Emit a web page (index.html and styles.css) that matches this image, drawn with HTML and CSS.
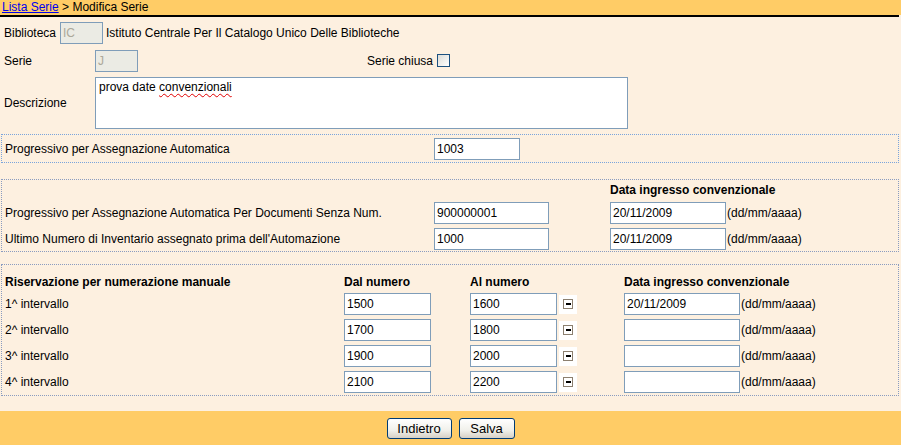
FILE: index.html
```html
<!DOCTYPE html>
<html>
<head>
<meta charset="utf-8">
<link rel="stylesheet" href="styles.css">
</head>
<body>
<div class="topbar"><a class="link" href="#">Lista Serie</a> &gt; Modifica Serie</div>
<div class="topline"></div>

<div class="top">
  <div class="row r1">
    <span class="lbl-inline">Biblioteca</span>
    <span class="inp dis w43">IC</span>
    <span>Istituto Centrale Per Il Catalogo Unico Delle Biblioteche</span>
  </div>
  <div class="row r2">
    <span class="lbl">Serie</span>
    <span class="inp dis w43">J</span>
    <span class="chiusa">Serie chiusa <span class="chk"></span></span>
  </div>
  <div class="row r3">
    <span class="lbl">Descrizione</span>
    <div class="area">prova date <span class="spell">convenzionali</span></div>
  </div>
</div>

<div class="box box1">
  <span class="b1lbl">Progressivo per Assegnazione Automatica</span>
  <span class="inp w86">1003</span>
</div>

<div class="box box2">
  <span></span><span></span><span class="hd">Data ingresso convenzionale</span>
  <span class="cl">Progressivo per Assegnazione Automatica Per Documenti Senza Num.</span>
  <span class="inp w115">900000001</span>
  <span class="cl"><span class="inp w116">20/11/2009</span><span class="fmt">(dd/mm/aaaa)</span></span>
  <span class="cl">Ultimo Numero di Inventario assegnato prima dell'Automazione</span>
  <span class="inp w115">1000</span>
  <span class="cl"><span class="inp w116">20/11/2009</span><span class="fmt">(dd/mm/aaaa)</span></span>
</div>

<div class="box box3">
  <span class="hd">Riservazione per numerazione manuale</span>
  <span class="hd">Dal numero</span>
  <span class="hd">Al numero</span>
  <span class="hd">Data ingresso convenzionale</span>

  <span class="cl">1^ intervallo</span>
  <span class="inp w87">1500</span>
  <span class="cl"><span class="inp w87">1600</span><span class="mini"><span class="minus"></span></span></span>
  <span class="cl"><span class="inp w116">20/11/2009</span><span class="fmt">(dd/mm/aaaa)</span></span>

  <span class="cl">2^ intervallo</span>
  <span class="inp w87">1700</span>
  <span class="cl"><span class="inp w87">1800</span><span class="mini"><span class="minus"></span></span></span>
  <span class="cl"><span class="inp w116"></span><span class="fmt">(dd/mm/aaaa)</span></span>

  <span class="cl">3^ intervallo</span>
  <span class="inp w87">1900</span>
  <span class="cl"><span class="inp w87">2000</span><span class="mini"><span class="minus"></span></span></span>
  <span class="cl"><span class="inp w116"></span><span class="fmt">(dd/mm/aaaa)</span></span>

  <span class="cl">4^ intervallo</span>
  <span class="inp w87">2100</span>
  <span class="cl"><span class="inp w87">2200</span><span class="mini"><span class="minus"></span></span></span>
  <span class="cl"><span class="inp w116"></span><span class="fmt">(dd/mm/aaaa)</span></span>
</div>

<div class="footer">
  <button class="btn b-ind">Indietro</button>
  <button class="btn b-sal">Salva</button>
</div>
</body>
</html>
```

FILE: styles.css
```css
html, body {
  margin: 0;
  padding: 0;
  background: #fdf0e0;
  font-family: "Liberation Sans", Arial, sans-serif;
  font-size: 12px;
  color: #000;
  width: 901px;
  height: 445px;
  overflow: hidden;
}

.topbar {
  height: 15px;
  line-height: 15px;
  background: #ffcc66;
  padding-left: 2px;
  white-space: nowrap;
}
.link {
  color: #0000ee;
  text-decoration: underline;
}
.topline {
  height: 2px;
  background: #000;
  margin-right: 2px;
}

.top {
  padding-left: 4px;
}
.row {
  display: flex;
  align-items: center;
}
.r1 { margin-top: 5px; height: 22px; }
.r2 { margin-top: 6px; height: 22px; }
.r3 { margin-top: 5px; }
.lbl-inline { margin-right: 4px; }
.r1 .inp { margin-right: 3px; }
.lbl {
  width: 91px;
  flex: none;
}
.chiusa {
  margin-left: 229px;
  display: flex;
  align-items: center;
  gap: 4px;
}
.chk {
  display: inline-block;
  width: 11px;
  height: 11px;
  border: 1px solid #1c5180;
  background: linear-gradient(135deg, #dcdcd7, #ffffff);
  margin-top: -1px;
}
.area {
  width: 525px;
  height: 48px;
  border: 1px solid #7f9db9;
  background: #fff;
  padding: 1px 3px;
  box-sizing: content-box;
  line-height: 16px;
}
.spell {
  text-decoration: underline wavy #e00000;
  text-decoration-thickness: 1px;
  text-underline-offset: 2px;
}

.inp {
  display: inline-block;
  box-sizing: border-box;
  height: 22px;
  line-height: 21px;
  border: 1px solid #7f9db9;
  background: #fff;
  padding: 0 2px;
  white-space: nowrap;
  flex: none;
}
.inp.dis {
  background: #ebebe4;
  color: #aca899;
}
.w43 { width: 43px; }
.w86 { width: 86px; }
.w87 { width: 87px; }
.w115 { width: 115px; }
.w116 { width: 116px; }

.box {
  margin-left: 1px;
  width: 898px;
  box-sizing: border-box;
  border: 1px dotted #8a9cc0;
  padding-left: 3px;
}
.box1 {
  margin-top: 5px;
  border-color: #7aa4dc;
  display: flex;
  align-items: center;
  padding-top: 2px;
  padding-bottom: 2px;
  height: 29px;
}
.b1lbl {
  width: 429px;
  flex: none;
  padding-top: 1px;
}

.box2 {
  margin-top: 16px;
  display: grid;
  grid-template-columns: 429px 176px auto;
  grid-template-rows: 16px 22px 22px;
  row-gap: 4px;
  align-items: center;
  padding-top: 2px;
  padding-bottom: 1px;
  height: 73px;
}

.box3 {
  margin-top: 12px;
  display: grid;
  grid-template-columns: 339px 126px 154px auto;
  grid-template-rows: 16px 22px 22px 22px 22px;
  row-gap: 4px;
  align-items: center;
  padding-top: 8px;
  padding-bottom: 2px;
  height: 132px;
}
.box3 .hd { padding-top: 2px; }

.hd { font-weight: bold; white-space: nowrap; }
.cl {
  display: flex;
  align-items: center;
  white-space: nowrap;
}
.fmt { margin-left: 1px; }

.mini {
  display: inline-flex;
  align-items: center;
  justify-content: center;
  width: 18px;
  height: 19px;
  background: #fff;
  margin-left: 2px;
}
.minus {
  position: relative;
  display: inline-block;
  width: 8px;
  height: 8px;
  border: 1px solid #8c8070;
  background: #fff;
}
.minus::after {
  content: "";
  position: absolute;
  left: 2px;
  top: 3px;
  width: 5px;
  height: 2px;
  background: #000;
}

.footer {
  margin-top: 15px;
  height: 34px;
  background: #ffcc66;
  display: flex;
  justify-content: center;
  align-items: flex-start;
  padding-top: 7px;
  box-sizing: border-box;
  gap: 7px;
}
.btn {
  font-family: "Liberation Sans", Arial, sans-serif;
  font-size: 13px;
  height: 21px;
  box-sizing: border-box;
  border: 1px solid #003c74;
  border-radius: 3px;
  background: linear-gradient(#ffffff, #f0f0ea 60%, #d6d0c5);
  padding: 0;
  color: #000;
  line-height: 18px;
}
.b-ind { width: 65px; }
.b-sal { width: 56px; }
```
